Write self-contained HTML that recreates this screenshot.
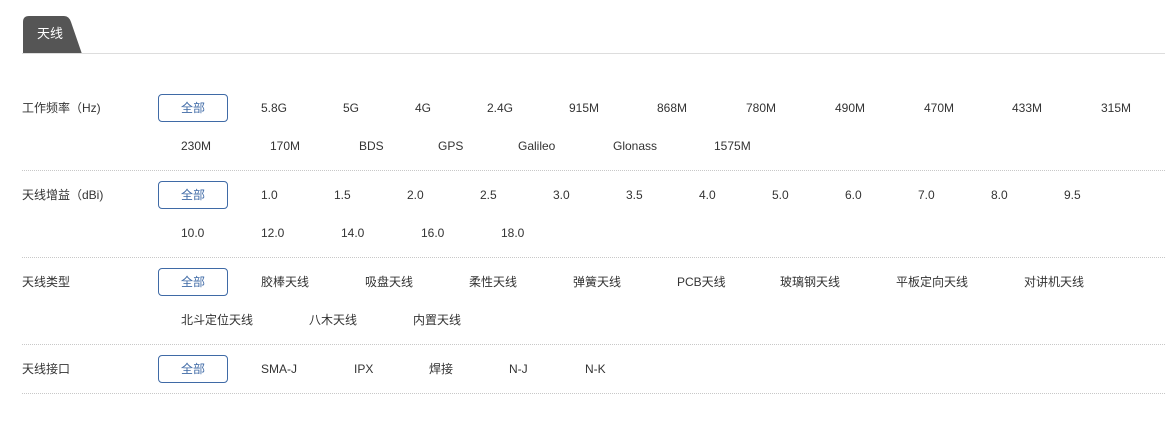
<!DOCTYPE html>
<html><head><meta charset="utf-8"><style>
body{margin:0;width:1165px;height:446px;background:#fff;position:relative;overflow:hidden;font-family:"Liberation Sans","Noto Sans CJK SC",sans-serif;font-size:12px;color:#333}
.t{position:absolute;line-height:14px;white-space:nowrap}
.b{position:absolute;left:158px;width:68px;height:26px;border:1px solid #3f6aa6;border-radius:4px;color:#3f6aa6;text-align:center;line-height:26px}
.s{position:absolute;left:22px;width:1143px;border-top:1px dotted #c8c8c8}
</style></head><body>
<svg style="position:absolute;left:22px;top:16px" width="62" height="38"><path d="M1 38 V6 Q1 0 7 0 H42 Q47 0 49 6 L60 38 Z" fill="#555"/></svg>
<div class="t" style="left:37px;top:27px;color:#fff;font-size:13px">天线</div>
<div style="position:absolute;left:22px;top:53px;width:1143px;border-top:1px solid #ddd"></div>

<div class="t" style="left:22px;top:101px">工作频率（Hz)</div>
<div class="b" style="top:94px">全部</div>
<div class="t" style="left:261px;top:101px">5.8G</div><div class="t" style="left:343px;top:101px">5G</div><div class="t" style="left:415px;top:101px">4G</div><div class="t" style="left:487px;top:101px">2.4G</div><div class="t" style="left:569px;top:101px">915M</div><div class="t" style="left:657px;top:101px">868M</div><div class="t" style="left:746px;top:101px">780M</div><div class="t" style="left:835px;top:101px">490M</div><div class="t" style="left:924px;top:101px">470M</div><div class="t" style="left:1012px;top:101px">433M</div><div class="t" style="left:1101px;top:101px">315M</div>
<div class="t" style="left:181px;top:139px">230M</div><div class="t" style="left:270px;top:139px">170M</div><div class="t" style="left:359px;top:139px">BDS</div><div class="t" style="left:438px;top:139px">GPS</div><div class="t" style="left:518px;top:139px">Galileo</div><div class="t" style="left:613px;top:139px">Glonass</div><div class="t" style="left:714px;top:139px">1575M</div>
<div class="s" style="top:170px"></div>

<div class="t" style="left:22px;top:188px">天线增益（dBi)</div>
<div class="b" style="top:181px">全部</div>
<div class="t" style="left:261px;top:188px">1.0</div><div class="t" style="left:334px;top:188px">1.5</div><div class="t" style="left:407px;top:188px">2.0</div><div class="t" style="left:480px;top:188px">2.5</div><div class="t" style="left:553px;top:188px">3.0</div><div class="t" style="left:626px;top:188px">3.5</div><div class="t" style="left:699px;top:188px">4.0</div><div class="t" style="left:772px;top:188px">5.0</div><div class="t" style="left:845px;top:188px">6.0</div><div class="t" style="left:918px;top:188px">7.0</div><div class="t" style="left:991px;top:188px">8.0</div><div class="t" style="left:1064px;top:188px">9.5</div>
<div class="t" style="left:181px;top:226px">10.0</div><div class="t" style="left:261px;top:226px">12.0</div><div class="t" style="left:341px;top:226px">14.0</div><div class="t" style="left:421px;top:226px">16.0</div><div class="t" style="left:501px;top:226px">18.0</div>
<div class="s" style="top:257px"></div>

<div class="t" style="left:22px;top:275px">天线类型</div>
<div class="b" style="top:268px">全部</div>
<div class="t" style="left:261px;top:275px">胶棒天线</div><div class="t" style="left:365px;top:275px">吸盘天线</div><div class="t" style="left:469px;top:275px">柔性天线</div><div class="t" style="left:573px;top:275px">弹簧天线</div><div class="t" style="left:677px;top:275px">PCB天线</div><div class="t" style="left:780px;top:275px">玻璃钢天线</div><div class="t" style="left:896px;top:275px">平板定向天线</div><div class="t" style="left:1024px;top:275px">对讲机天线</div>
<div class="t" style="left:181px;top:313px">北斗定位天线</div><div class="t" style="left:309px;top:313px">八木天线</div><div class="t" style="left:413px;top:313px">内置天线</div>
<div class="s" style="top:344px"></div>

<div class="t" style="left:22px;top:362px">天线接口</div>
<div class="b" style="top:355px">全部</div>
<div class="t" style="left:261px;top:362px">SMA-J</div><div class="t" style="left:354px;top:362px">IPX</div><div class="t" style="left:429px;top:362px">焊接</div><div class="t" style="left:509px;top:362px">N-J</div><div class="t" style="left:585px;top:362px">N-K</div>
<div class="s" style="top:393px"></div>
</body></html>
